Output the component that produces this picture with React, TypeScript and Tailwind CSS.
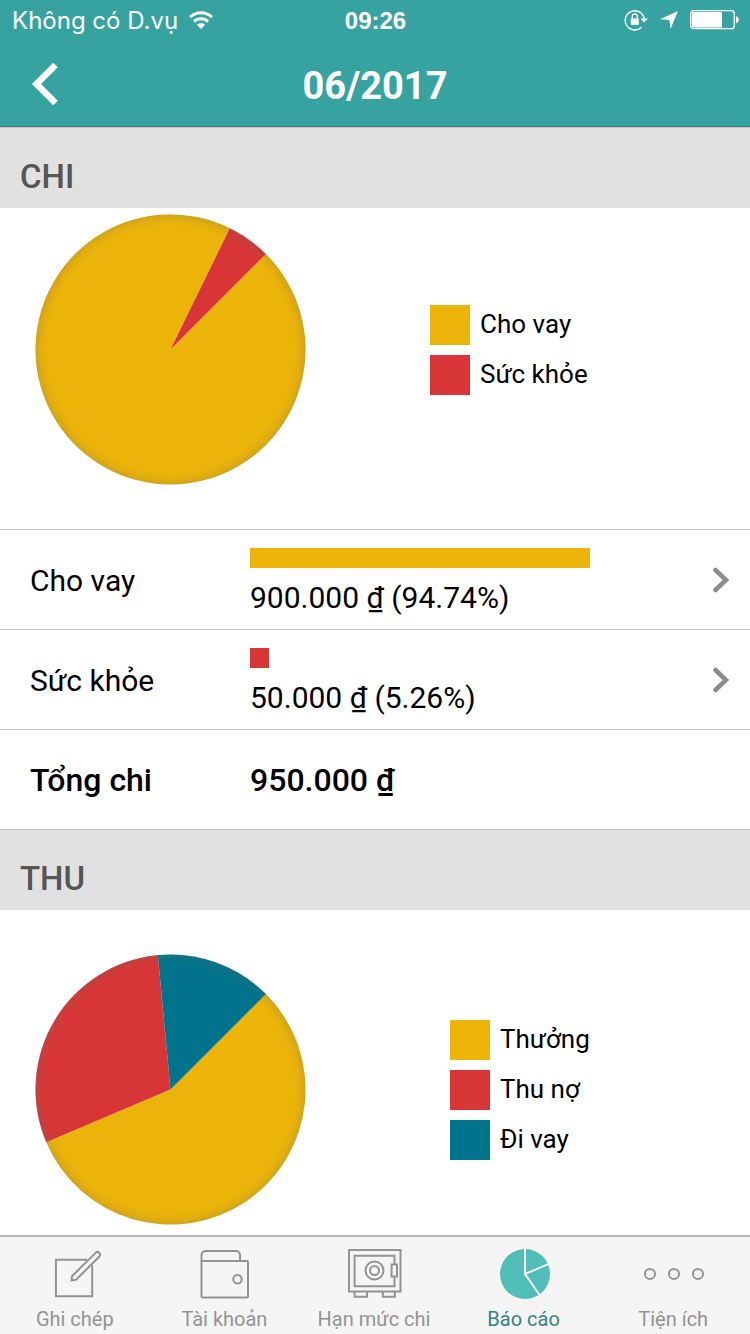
import React from "react";

const YELLOW = "#ecb408";
const RED = "#d83636";
const BLUE = "#00748c";

const expenses = [
  { name: "Cho vay", amount: 900000, label: "900.000 ₫ (94.74%)", color: YELLOW },
  { name: "Sức khỏe", amount: 50000, label: "50.000 ₫ (5.26%)", color: RED },
];

const incomes = [
  { name: "Thưởng", amount: 5610000, color: YELLOW },
  { name: "Thu nợ", amount: 2990000, color: RED },
  { name: "Đi vay", amount: 1400000, color: BLUE },
];

type Slice = { name: string; amount: number; color: string };

const PieChart = ({ id, data }: { id: string; data: Slice[] }) => {
  const total = data.reduce((sum, d) => sum + d.amount, 0);
  const point = (deg: number) => {
    const rad = ((deg - 90) * Math.PI) / 180;
    return `${135 + 135 * Math.cos(rad)} ${135 + 135 * Math.sin(rad)}`;
  };

  // first slice starts at 45 degrees and goes clockwise
  let angle = 45;
  const slices = data.map((d) => {
    const start = angle;
    const sweep = (d.amount / total) * 360;
    angle += sweep;
    return {
      ...d,
      path: `M135 135L${point(start)}A135 135 0 ${sweep > 180 ? 1 : 0} 1 ${point(angle)}Z`,
    };
  });

  return (
    <svg viewBox="-0.5 -0.5 270 270" className="w-[270px] h-[270px] shrink-0 overflow-visible" role="img" aria-label={id}>
      <defs>
        <radialGradient id={`shade-${id}`}>
          <stop offset="0.91" stopColor="#666" stopOpacity="0" />
          <stop offset="0.96" stopColor="#666" stopOpacity="0.07" />
          <stop offset="1" stopColor="#666" stopOpacity="0.22" />
        </radialGradient>
      </defs>
      {slices.map((s) => (
        <path key={s.name} d={s.path} fill={s.color} />
      ))}
      <circle cx="135" cy="135" r="135" fill={`url(#shade-${id})`} />
    </svg>
  );
};

const Legend = ({ data }: { data: Slice[] }) => (
  <ul className="flex flex-col gap-[10px] pt-[2px]">
    {data.map((d) => (
      <li key={d.name} className="flex items-center gap-[10px] text-[26px] leading-[38px]">
        <span className="w-10 h-10" style={{ backgroundColor: d.color }}></span>
        <span className="pb-[2px]">{d.name}</span>
      </li>
    ))}
  </ul>
);

const SectionTitle = ({ children }: { children: React.ReactNode }) => (
  <h2 className="border-t border-[#c3c3c3] bg-[#e1e1e1] px-5 pt-[29px] pb-[11px] text-[33px] leading-10 font-medium text-[#555]">
    {children}
  </h2>
);

const StatusBar = () => (
  <div className="grid grid-cols-[1fr_auto_1fr] items-center h-10 pl-3 pr-[11px] text-[24px] leading-8">
    <div className="flex items-center gap-[11px] font-['Inter','Liberation_Sans',sans-serif]">
      <span className="pt-[2px]">Không có D.vụ</span>
      <svg viewBox="0 0 24 18" className="w-6 h-[18px]" fill="none" stroke="currentColor" strokeWidth="3">
        <path d="M1 6.3a15.6 15.6 0 0 1 22 0" />
        <path d="M5 10.6a10 10 0 0 1 14 0" />
        <path d="M12 18l-4.2-4.2a6 6 0 0 1 8.4 0z" fill="currentColor" stroke="none" />
      </svg>
    </div>
    <span className="pt-[2px] font-bold font-['Liberation_Sans',sans-serif]">09:26</span>
    <div className="flex items-center justify-end gap-3">
      <svg viewBox="0 0 24 22" className="w-6 h-[22px]">
        <path
          d="M20.2 9.5A9.6 9.6 0 1 0 17.5 18.3"
          fill="none"
          stroke="currentColor"
          strokeWidth="1.4"
        />
        <path d="M16.5 9.5h7.500L20 13.5z" fill="currentColor" />
        <rect x="6.8" y="9.5" width="8" height="6.5" rx="0.6" fill="currentColor" />
        <path d="M8.3 10V7.500a2.500 2.500 0 0 1 5 0V10" fill="none" stroke="currentColor" strokeWidth="1.3" />
      </svg>
      <svg viewBox="0 0 18 18" className="w-[18px] h-[18px]" fill="currentColor">
        <path d="M18 0L10.5 18L9.500 9L0 8.200z" />
      </svg>
      <svg viewBox="0 0 49 20" className="w-[49px] h-5">
        <rect x="0.7" y="0.7" width="43.6" height="18" rx="3" fill="none" stroke="currentColor" strokeWidth="1.3" />
        <rect x="2" y="2" width="30" height="15.4" rx="1.2" fill="currentColor" />
        <path d="M46 6.3c3.6.6 3.6 6.4 0 7z" fill="currentColor" />
      </svg>
    </div>
  </div>
);

const tabs = [
  {
    name: "Ghi chép",
    icon: (
      <>
        <path d="M40 12.8H8.9V49.2H45.2V18" />
        <path d="M25 29.2L48.6 5.9a2.6 2.6 0 0 1 3.8 3.6L29 32.7L24.6 33.4z" />
      </>
    ),
  },
  {
    name: "Tài khoản",
    icon: (
      <>
        <rect x="5.5" y="14" width="46.5" height="36.5" rx="1" />
        <path d="M5.5 15V8a4 4 0 0 1 4-4h30.5a4 4 0 0 1 4 4v6" />
        <circle cx="41.5" cy="32.2" r="4.2" />
      </>
    ),
  },
  {
    name: "Hạn mức chi",
    icon: (
      <>
        <rect x="3" y="3" width="51.5" height="41.5" />
        <path d="M48.5 17V8.8H8.6V39.2H48.5V30" />
        <rect x="45.6" y="17.5" width="5.4" height="12" />
        <circle cx="28.5" cy="23.5" r="9" />
        <circle cx="28.5" cy="23.5" r="4.5" />
        <path d="M8.6 44.5v5.2H21v-5.2M36.8 44.5v5.2h12v-5.2" />
      </>
    ),
  },
  {
    name: "Báo cáo",
    active: true,
    icon: (
      <>
        <circle cx="29" cy="27" r="25" fill="#50bdb8" stroke="none" />
        <path d="M29 1V27L53 16.8M29 27L44 48.5" stroke="#f5f5f5" />
      </>
    ),
  },
  {
    name: "Tiện ích",
    icon: (
      <>
        <circle cx="5" cy="27" r="5" />
        <circle cx="29" cy="27" r="5" />
        <circle cx="53" cy="27" r="5" />
      </>
    ),
  },
];

const App = () => {
  const max = Math.max(...expenses.map((e) => e.amount));

  return (
    <div className="min-h-screen flex flex-col bg-white text-black font-['Roboto',sans-serif]">
      <header className="bg-[#37a3a0] text-white border-b border-[#3f7f7d]">
        <StatusBar />
        <div className="grid grid-cols-[1fr_auto_1fr] items-center h-[86px] px-7">
          <button aria-label="Back" className="justify-self-start">
            <svg viewBox="0 0 32 44" className="w-8 h-11" fill="none" stroke="currentColor" strokeWidth="6.5">
              <path d="M27.5 4L8.5 23L27.5 42" />
            </svg>
          </button>
          <h1 className="text-[38px] leading-[48px] pt-[6px] font-bold">06/2017</h1>
        </div>
      </header>

      <main className="flex-1">
        <section>
          <SectionTitle>CHI</SectionTitle>
          <div className="flex items-center gap-[125px] pl-[35px] pt-[6px] pb-[45px]">
            <PieChart id="chi" data={expenses} />
            <Legend data={expenses} />
          </div>

          <ul>
            {expenses.map((item) => (
              <li key={item.name} className="border-t border-[#c3c3c3]">
                <button className="w-full h-[99px] grid grid-cols-[220px_1fr_auto] items-center pl-[30px] pr-5 text-left text-[30px] leading-10">
                  <span className="pt-[2px]">{item.name}</span>
                  <span className="flex flex-col gap-[10px] pt-[6px]">
                    <span className="block w-full max-w-[340px]">
                      <span
                        className="block h-5"
                        style={{ width: `${(item.amount / max) * 100}%`, backgroundColor: item.color }}
                      ></span>
                    </span>
                    <span>{item.label}</span>
                  </span>
                  <svg
                    viewBox="0 0 18 26"
                    className="w-[18px] h-[26px]"
                    fill="none"
                    stroke="#8c8c8c"
                    strokeWidth="4.5"
                    strokeLinecap="round"
                  >
                    <path d="M3.5 3L14 13L3.5 23" />
                  </svg>
                </button>
              </li>
            ))}
            <li className="border-t border-[#c3c3c3] h-[100px] grid grid-cols-[220px_1fr] items-center px-[30px] text-[32px] leading-10 font-medium">
              <span>Tổng chi</span>
              <span>950.000 ₫</span>
            </li>
          </ul>
        </section>

        <section>
          <SectionTitle>THU</SectionTitle>
          <div className="flex items-center gap-[145px] pl-[35px] pt-11 pb-[11px]">
            <PieChart id="thu" data={incomes} />
            <Legend data={incomes} />
          </div>
        </section>
      </main>

      <nav className="grid grid-cols-5 border-t-2 border-[#b4b4b4] bg-[#f5f5f5] pt-[10px] pr-[2px] pb-[3px]">
        {tabs.map((tab) => (
          <a
            key={tab.name}
            href="#"
            className={`flex flex-col items-center gap-1 text-[20px] leading-6 ${
              tab.active ? "text-[#37837f]" : "text-[#939393]"
            }`}
          >
            <svg
              viewBox="0 0 56 56"
              className="w-14 h-14 overflow-visible"
              fill="none"
              stroke="currentColor"
              strokeWidth="2"
            >
              {tab.icon}
            </svg>
            <span>{tab.name}</span>
          </a>
        ))}
      </nav>
    </div>
  );
};

export default App;
